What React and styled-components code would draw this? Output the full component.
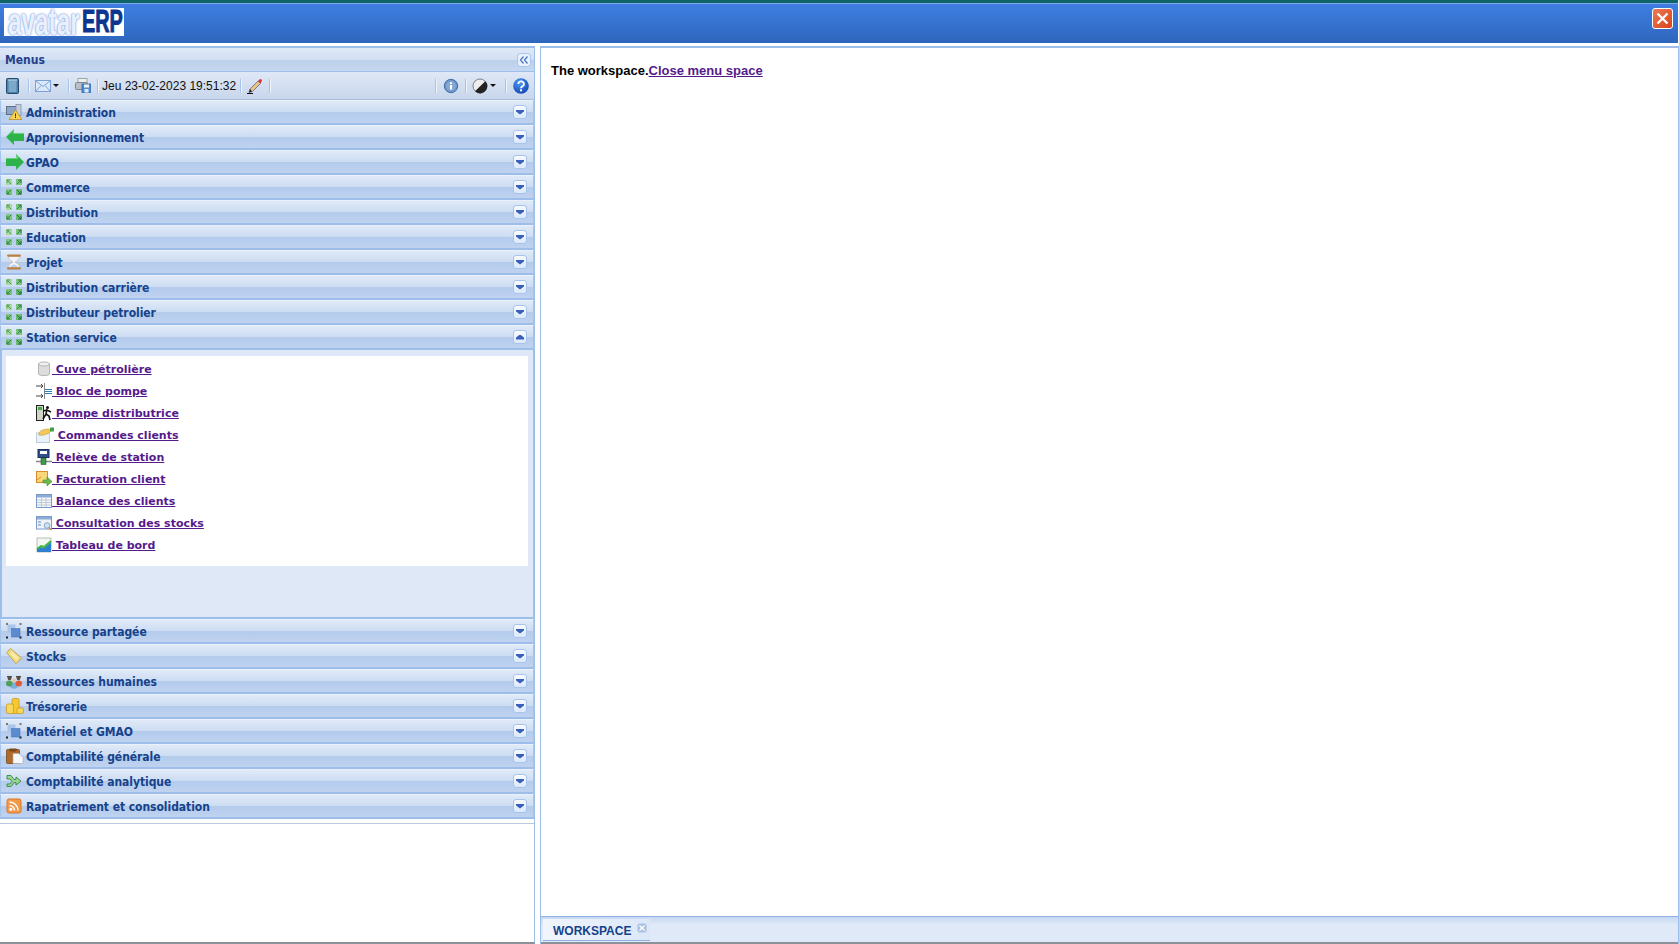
import React from "react";
import styled, { createGlobalStyle } from "styled-components";

const Global = createGlobalStyle`
  html, body { margin: 0; height: 100%; background: #fff; overflow: hidden; }
  body { font-family: "Liberation Sans", Arial, sans-serif; }
  svg { flex: none; display: block; }
`;

const Page = styled.div`
  height: 944px;
  display: flex;
  flex-direction: column;
`;
const TopBar = styled.div`
  height: 43px;
  flex: none;
  box-sizing: border-box;
  margin-right: 1px;
  border-top: 3px solid #0f6468;
  box-shadow: inset 0 1px 0 #7fa6e6;
  background: linear-gradient(#3f7fe3, #2f66bd);
  display: flex;
  align-items: flex-start;
  justify-content: space-between;
  padding: 5px 5px 0 4px;
`;
const Logo = styled.div`
  width: 120px;
  height: 28px;
  background: #fff;
  display: flex;
  align-items: center;
  padding-left: 4px;
  box-sizing: border-box;
`;
const LogoSoft = styled.span`
  width: 74px;
  font: bold 38px/28px "Liberation Sans", sans-serif;
  color: #eaf0fc;
  text-shadow: 0 0 2px #6f92de, 0 0 3px #9db6ee;
  transform: scaleX(0.64);
  transform-origin: left center;
  white-space: nowrap;
`;
const LogoHard = styled.span`
  width: 38px;
  font: bold 31px/28px "Liberation Sans", sans-serif;
  color: #0d3590;
  -webkit-text-stroke: 1px #0d3590;
  transform: scaleX(0.64);
  transform-origin: left center;
  white-space: nowrap;
`;
const CloseBtn = styled.div`
  width: 21px;
  height: 21px;
  box-sizing: border-box;
  border: 1px solid #fff;
  border-radius: 3px;
  background: linear-gradient(135deg, #ec7a55, #d8441a);
  display: flex;
  align-items: center;
  justify-content: center;
`;
const Main = styled.div`
  flex: 1;
  min-height: 0;
  display: flex;
  padding-top: 3px;
`;
const Sidebar = styled.div`
  width: 535px;
  flex: none;
  box-sizing: border-box;
  border-right: 1px solid #9dbdea;
  border-bottom: 2px solid #8a9199;
  display: flex;
  flex-direction: column;
`;
const PanelHead = styled.div`
  height: 26px;
  flex: none;
  box-sizing: border-box;
  border-top: 2px solid #9dbdea;
  border-bottom: 1px solid #9dbdea;
  background: linear-gradient(#dfe9f7 0%, #d3e0f3 50%, #bcd0ec 52%, #c6d7f0 100%);
  display: flex;
  align-items: center;
  justify-content: space-between;
  padding: 0 3px 0 5px;
`;
const PanelTitle = styled.span`
  padding-top: 1px;
  font: bold 12px "DejaVu Sans Condensed", "Liberation Sans", sans-serif;
  color: #24408a;
`;
const Toolbar = styled.div`
  height: 28px;
  flex: none;
  box-sizing: border-box;
  background: linear-gradient(#dfe8f6, #c8d6ec);
  border-bottom: 1px solid #a9bcd8;
  display: flex;
  align-items: center;
  padding: 0 5px 0 6px;
`;
const ToolGroup = styled.div`
  display: flex;
  align-items: center;
`;
const Spacer = styled.div`
  flex: 1;
`;
const Sep = styled.span`
  width: 1px;
  height: 14px;
  background: #a8c3ea;
  box-shadow: 1px 0 0 #eef4fc;
  margin: 0 ${(p) => p.$right ?? 6}px 0 ${(p) => p.$left ?? 6}px;
`;
const ClockText = styled.span`
  font: 12px "Liberation Sans", sans-serif;
  color: #111;
  white-space: nowrap;
`;
const Caret = styled.span`
  width: 0;
  height: 0;
  border-left: 3px solid transparent;
  border-right: 3px solid transparent;
  border-top: 3px solid #111;
  margin-left: 2px;
`;
const Row = styled.div`
  height: 25px;
  box-sizing: border-box;
  flex: none;
  border: 1px solid #a6c3ec;
  border-bottom: 2px solid #9dbdea;
  border-top-color: #eaf1fb;
  background: linear-gradient(#e0eaf8 0%, #ccdcf2 50%, #b4cbec 52%, #bfd3f0 100%);
  display: flex;
  align-items: center;
  padding: 0 6px 0 5px;
`;
const RowIcon = styled.span`
  width: 16px;
  height: 16px;
  flex: none;
  display: flex;
`;
const RowLabel = styled.span`
  flex: 1;
  margin-left: 4px;
  padding-top: 1px;
  font: bold 12px "DejaVu Sans Condensed", "Liberation Sans", sans-serif;
  letter-spacing: -0.05px;
  color: #15428b;
`;
const ToggleBtn = styled.span`
  width: 14px;
  height: 14px;
  box-sizing: border-box;
  border: 1px solid #a9c4ea;
  border-radius: 3px;
  background: linear-gradient(#f8fbff, #dbe9fb);
  display: flex;
  align-items: center;
  justify-content: center;
`;
const Tri = styled.span`
  width: 8px;
  height: 5px;
  background: #3a5fb8;
  clip-path: ${(p) =>
    p.$up
      ? "polygon(50% 0, 100% 60%, 100% 100%, 0 100%, 0 60%)"
      : "polygon(0 0, 100% 0, 100% 40%, 50% 100%, 0 40%)"};
`;
const RowBody = styled.div`
  height: 269px;
  flex: none;
  box-sizing: border-box;
  background: #dfe8f6;
  border: 2px solid #9dbdea;
  border-top: 0;
  border-right-width: 1px;
  padding: 6px 5px 0 4px;
`;
const LinkBox = styled.div`
  height: 210px;
  background: #fff;
  box-sizing: border-box;
  padding: 2px 0 0 30px;
`;
const LinkRow = styled.div`
  height: 22px;
  display: flex;
  align-items: center;
`;
const MenuLink = styled.a`
  font: bold 11px "DejaVu Sans", Verdana, sans-serif;
  color: #551a8b;
  text-decoration: underline;
  white-space: pre;
  display: flex;
  align-items: center;
`;
const LinkIcon = styled.span`
  width: ${(p) => p.$width || 16}px;
  height: 16px;
  display: inline-flex;
`;
const MenuEnd = styled.div`
  margin-top: 4px;
  height: 1px;
  flex: none;
  background: #b9c9df;
`;
const Workspace = styled.div`
  flex: 1;
  margin-left: 5px;
  min-width: 0;
  box-sizing: border-box;
  border: 1px solid #9dbdea;
  border-top-width: 2px;
  border-bottom: 0;
  display: flex;
  flex-direction: column;
`;
const WorkBody = styled.div`
  flex: 1;
  padding: 15px 10px;
  font: bold 13px "Liberation Sans", sans-serif;
  color: #000;
`;
const WorkLink = styled.a`
  color: #551a8b;
  text-decoration: underline;
`;
const TabStrip = styled.div`
  height: 28px;
  flex: none;
  box-sizing: border-box;
  border-top: 1px solid #8db2e3;
  border-bottom: 2px solid #8a9199;
  background: linear-gradient(#c5d8f2, #dfe9f8 30%, #dfe9f8);
  padding: 2px 0 0 2px;
`;
const Tab = styled.div`
  width: 107px;
  height: 22px;
  box-sizing: border-box;
  background: linear-gradient(90deg, #f1f5fc, #dbe7f8);
  border-bottom: 1px solid #8db2e3;
  display: flex;
  align-items: center;
  padding: 2px 0 0 10px;
`;
const TabLabel = styled.span`
  font: bold 12px "Liberation Sans", sans-serif;
  color: #15428b;
`;
const TabClose = styled.span`
  width: 10px;
  height: 10px;
  box-sizing: border-box;
  border: 1px solid #c2d3ec;
  border-radius: 3px;
  background: #a9bfe0;
  margin: -6px 0 0 6px;
  display: flex;
  align-items: center;
  justify-content: center;
`;

const Ic = ({ children, w = 16 }) => (
  <svg width={w} height="16" viewBox={`0 0 ${w} 16`}>{children}</svg>
);

const Book = () => (
  <svg width="13" height="16" viewBox="0 0 13 16">
    <rect x="0.5" y="0.5" width="12" height="15" rx="1" fill="#4a7fa8" stroke="#27496b" />
    <rect x="2.5" y="3" width="8" height="11" fill="#7aa9cc" />
    <rect x="2" y="1.5" width="9" height="1.2" fill="#bcd5e8" />
  </svg>
);
const Mail = () => (
  <svg width="16" height="12" viewBox="0 0 16 12">
    <rect x="0.5" y="0.5" width="15" height="11" fill="#dce9fb" stroke="#7da0d8" />
    <path d="M1 1l7 5.5L15 1M1 11l5-5.5M15 11l-5-5.5" fill="none" stroke="#7da0d8" />
  </svg>
);
const Printer = () => (
  <svg width="16" height="15" viewBox="0 0 16 15">
    <rect x="3" y="0.5" width="9" height="5" fill="#eee" stroke="#9aa" />
    <rect x="0.5" y="4.5" width="12" height="7" rx="1" fill="#b9bfc7" stroke="#7e8790" />
    <rect x="7" y="6" width="9" height="9" fill="#4f8fd0" stroke="#2d5f9c" strokeWidth="0.7" />
    <rect x="9" y="6.5" width="5" height="3" fill="#eaf2fb" />
    <rect x="9.5" y="11" width="4" height="3.5" fill="#dfe8f2" />
  </svg>
);
const Pencil = () => (
  <Ic>
    <path d="M3 11L11 3l2.5 2.500-8 8-3.500 1z" fill="#e8c878" stroke="#6a5fa8" strokeWidth="0.8" />
    <path d="M11 3l1.500-1.500a1.300 1.300 0 0 1 2 2L13.500 5.500z" fill="#d8342a" />
    <path d="M0 15.500h6" stroke="#111" />
    <path d="M3 11l2 2.500-3 1z" fill="#222" />
  </Ic>
);
const Info = () => (
  <Ic>
    <circle cx="8" cy="8" r="6.700" fill="#6f97c9" stroke="#436fa6" />
    <circle cx="8" cy="8" r="4.700" fill="#86a9d6" />
    <rect x="7" y="7" width="2" height="4.500" fill="#fff" />
    <rect x="7" y="4.200" width="2" height="1.800" fill="#fff" />
  </Ic>
);
const Contrast = () => (
  <Ic>
    <circle cx="8" cy="8" r="7" fill="#eee" stroke="#555" strokeWidth="0.7" />
    <path d="M13.300 3.200A7 7 0 0 1 3 13.200z" fill="#222" />
  </Ic>
);
const Help = () => (
  <Ic>
    <defs>
      <radialGradient id="hlp" cx="0.4" cy="0.3" r="0.8">
        <stop offset="0" stopColor="#4d9af0" />
        <stop offset="1" stopColor="#0d3fb0" />
      </radialGradient>
    </defs>
    <circle cx="8" cy="8" r="7.800" fill="url(#hlp)" />
    <path d="M5.300 6a2.800 2.600 0 1 1 4.200 2.200C8.500 8.900 8 9.200 8 10.300" fill="none" stroke="#fff" strokeWidth="1.800" />
    <rect x="7" y="11.300" width="2" height="2" fill="#fff" />
  </Ic>
);
const Collapse = () => (
  <svg width="14" height="14" viewBox="0 0 14 14">
    <rect x="0.500" y="0.500" width="13" height="13" rx="3" fill="#e9f1fc" stroke="#a9c4ea" />
    <path d="M6.500 3.500L3.500 7l3 3.500M10.500 3.500L7.500 7l3 3.500" fill="none" stroke="#4f76c2" strokeWidth="1.300" />
  </svg>
);

const Warn = () => (
  <Ic>
    <rect x="0.500" y="2.500" width="11" height="8" fill="#8ea6c4" stroke="#5d6f89" />
    <rect x="10" y="0.500" width="5" height="11" fill="#c3ccd8" stroke="#7f8ba0" strokeWidth="0.7" />
    <path d="M9.500 6L16 15.500H3z" fill="#f7d34e" stroke="#b4862a" strokeWidth="0.7" />
    <rect x="9" y="9.500" width="1" height="3" fill="#333" />
    <rect x="9" y="13" width="1" height="1" fill="#333" />
  </Ic>
);
const ArrowLeft = () => (
  <Ic w={18}>
    <path d="M0 8l8-8v4h10v8H8v4z" fill="#2eb24a" />
    <path d="M0 8l8-8v4h10v1H7V2.500z" fill="#68d078" />
  </Ic>
);
const ArrowRight = () => (
  <Ic w={18}>
    <path d="M18 8l-8-8v4H0v8h10v4z" fill="#2eb24a" />
    <path d="M0 4h10V0l2 2v3H0z" fill="#68d078" />
  </Ic>
);
const Arrows = () => (
  <Ic>
    <path d="M0 0h6v6H0z" fill="#a8d8a2" />
    <path d="M1 1l4 4M1 1h3M1 1v3" stroke="#4d9c56" fill="none" />
    <path d="M10 0h6v6h-6z" fill="#7cc47f" />
    <path d="M15 1l-4 4M15 1h-3M15 1v3" stroke="#2f8440" fill="none" />
    <path d="M0 10h6v6H0z" fill="#7cc47f" />
    <path d="M1 15l4-4M1 15h3M1 15v-3" stroke="#2f8440" fill="none" />
    <path d="M10 10h6v6h-6z" fill="#6ab872" />
    <path d="M15 15l-4-4M15 15h-3M15 15v-3" stroke="#1f7432" fill="none" />
  </Ic>
);
const Hourglass = () => (
  <Ic>
    <path d="M2.500 2c0 5 4.500 5 4.500 6s-4.500 1-4.500 6h11c0-5-4.500-5-4.500-6s4.500-1 4.500-6z" fill="#f2f6fc" stroke="#c3b49c" strokeWidth="0.6" />
    <path d="M4 13.500c1-2 3-3 4-3s3 1 4 3z" fill="#b9cfe9" />
    <rect x="1" y="0.500" width="14" height="2.200" rx="1.100" fill="#b98244" />
    <rect x="1" y="13.300" width="14" height="2.200" rx="1.100" fill="#b98244" />
  </Ic>
);
const Shapes = () => (
  <Ic>
    <rect x="1.500" y="1.500" width="8" height="8" fill="#a9c6ea" />
    <rect x="5.500" y="5.500" width="8.500" height="8.500" fill="#5b8ad0" stroke="#3f6fb8" strokeWidth="0.5" />
    <rect x="0" y="0" width="2" height="2" fill="#777" />
    <rect x="13.500" y="0" width="2" height="2" fill="#777" />
    <rect x="0" y="13.500" width="2" height="2" fill="#222" />
    <rect x="13.500" y="13.500" width="2" height="2" fill="#222" />
  </Ic>
);
const Tag = () => (
  <Ic>
    <path d="M0.500 4.500L4.500 0.500l11 9.500-5.500 5.500z" fill="#f3dc85" stroke="#c2a544" />
    <path d="M3 4.500l7.500 7.500 2-2-7.500-7.500z" fill="#f9ecae" />
    <circle cx="3.800" cy="3.800" r="1" fill="#fff" stroke="#c2a544" strokeWidth="0.5" />
  </Ic>
);
const People = () => (
  <Ic>
    <ellipse cx="8" cy="12.500" rx="4" ry="3.200" fill="#79b0dc" />
    <ellipse cx="3.200" cy="10.500" rx="3.200" ry="3" fill="#4ea257" />
    <ellipse cx="12.800" cy="10.500" rx="3.200" ry="3" fill="#e05a3a" />
    <path d="M1 3h5v1.500H1zM10 3h5v1.500h-5z" fill="#54493f" />
    <circle cx="3.500" cy="5.500" r="1.800" fill="#54493f" />
    <circle cx="12.500" cy="5.500" r="1.800" fill="#54493f" />
    <circle cx="8" cy="7.500" r="2" fill="#e9c9a4" />
  </Ic>
);
const Coins = () => (
  <Ic w={18}>
    <rect x="6" y="0.500" width="7" height="15" rx="1.500" fill="#f6c834" stroke="#c4921a" strokeWidth="0.7" />
    <rect x="0.500" y="6" width="7" height="9.500" rx="1.500" fill="#f9d75a" stroke="#c4921a" strokeWidth="0.7" />
    <rect x="11" y="10" width="6.500" height="5.500" rx="1.500" fill="#f9d75a" stroke="#c4921a" strokeWidth="0.7" />
  </Ic>
);
const Clipboard = () => (
  <Ic w={18}>
    <rect x="0.500" y="1.500" width="13" height="14" rx="1" fill="#b26a28" stroke="#6e3c12" strokeWidth="0.7" />
    <rect x="3.500" y="0.500" width="7" height="3" fill="#7a4a1c" />
    <path d="M7 5.500h6l4 4v6H7z" fill="#f6f7f9" stroke="#a9b0ba" strokeWidth="0.7" />
  </Ic>
);
const Branch = () => (
  <Ic>
    <path d="M1 2.500h4l3 4h2V4l5 4-5 4v-2.500H8l-3 4H1v-2.500h3l2-2.500-2-2.500H1z" fill="#9fd39c" stroke="#2f8a3e" strokeWidth="0.9" />
  </Ic>
);
const Rss = () => (
  <Ic>
    <rect x="1" y="1" width="14" height="14" rx="2" fill="#f29a4a" stroke="#d57a2a" />
    <circle cx="4.800" cy="11.300" r="1.500" fill="#fff" />
    <path d="M3.500 7.500a5 5 0 0 1 5 5M3.500 4a8.500 8.500 0 0 1 8.500 8.500" fill="none" stroke="#fff" strokeWidth="1.500" />
  </Ic>
);
const Cylinder = () => (
  <Ic>
    <path d="M2.500 3v10c0 2 11 2 11 0V3z" fill="#dcdcdc" stroke="#b5b5b5" />
    <ellipse cx="8" cy="3" rx="5.500" ry="2" fill="#f2f2f2" stroke="#b5b5b5" />
  </Ic>
);
const Block = () => (
  <Ic>
    <path d="M0 3h7M5 1l2 2-2 2M0 13h7M5 11l2 2-2 2" stroke="#444" fill="none" />
    <path d="M8.500 0v16" stroke="#888" />
    <path d="M9 6.500h7M9 8.500h7M9 10.500h7" stroke="#2b7fc0" />
  </Ic>
);
const Runner = () => (
  <Ic>
    <rect x="0.500" y="0.500" width="7" height="15" fill="#cfd6c8" stroke="#222" />
    <rect x="2" y="2" width="4" height="3" fill="#4ca84c" />
    <circle cx="11.500" cy="2.500" r="1.500" fill="#111" />
    <path d="M11 4l-1 5 3 2 1 4M10 9l-3 5M7 6l4-1 4 2" stroke="#111" strokeWidth="1.600" fill="none" />
  </Ic>
);
const Hand = () => (
  <Ic w={18}>
    <rect x="0.500" y="6" width="13" height="9.500" fill="#eaf1f9" stroke="#bccde2" />
    <path d="M3 6c1-3 6-4 10-4l2 2c-2 3-9 5-12 4z" fill="#f2c85c" stroke="#c9982c" strokeWidth="0.6" />
    <rect x="14" y="0.500" width="4" height="4" fill="#3fa14a" />
  </Ic>
);
const Station = () => (
  <Ic>
    <rect x="2" y="0.500" width="11" height="8" fill="#2d4f8e" stroke="#1d2f5a" />
    <rect x="4" y="2" width="7" height="3" fill="#fff" />
    <path d="M0 12.500h16" stroke="#888" strokeWidth="1.500" />
    <rect x="5" y="9" width="5" height="6.500" fill="#3f9a4a" stroke="#205a2a" strokeWidth="0.6" />
  </Ic>
);
const Invoice = () => (
  <Ic>
    <rect x="0.500" y="0.500" width="11" height="11" fill="#f8d77a" stroke="#d98c2c" />
    <path d="M1 9l4-3" stroke="#d98c2c" />
    <path d="M7 9h4V6l5 4.500-5 4.500v-3H7z" fill="#6bb84f" stroke="#3d8a2c" strokeWidth="0.6" />
  </Ic>
);
const Table = () => (
  <Ic>
    <rect x="0.500" y="1.500" width="15" height="13" fill="#f4f7fb" stroke="#7b9cc8" />
    <rect x="1" y="2" width="14" height="2.500" fill="#8cacd8" />
    <path d="M1 7h14M1 9.500h14M1 12h14M5.500 5v9M10 5v9" stroke="#c0c8d4" />
  </Ic>
);
const Search = () => (
  <Ic>
    <rect x="0.500" y="1.500" width="15" height="12.500" fill="#eef3fa" stroke="#7b9cc8" />
    <rect x="1" y="2" width="14" height="2.500" fill="#8cacd8" />
    <path d="M2 7h3M2 10h3" stroke="#6a85ad" />
    <circle cx="11" cy="10.500" r="2.800" fill="#cfe2f6" stroke="#8ba5c8" />
    <path d="M13 12.500l2.500 2.500" stroke="#c88c3c" strokeWidth="1.300" />
  </Ic>
);
const Chart = () => (
  <Ic>
    <rect x="1" y="1" width="14" height="14" fill="#f4f6f4" stroke="#9aa7a0" strokeWidth="0.7" />
    <path d="M1 15V12l4-2 3 1 7-6v10z" fill="#2f7fd0" />
    <path d="M1 12l4-3 3 1 7-6" stroke="#3fb83f" strokeWidth="2" fill="none" />
  </Ic>
);

const topRows = [
  ["Administration", <Warn />],
  ["Approvisionnement", <ArrowLeft />],
  ["GPAO", <ArrowRight />],
  ["Commerce", <Arrows />],
  ["Distribution", <Arrows />],
  ["Education", <Arrows />],
  ["Projet", <Hourglass />],
  ["Distribution carrière", <Arrows />],
  ["Distributeur petrolier", <Arrows />],
];
const bottomRows = [
  ["Ressource partagée", <Shapes />],
  ["Stocks", <Tag />],
  ["Ressources humaines", <People />],
  ["Trésorerie", <Coins />],
  ["Matériel et GMAO", <Shapes />],
  ["Comptabilité générale", <Clipboard />],
  ["Comptabilité analytique", <Branch />],
  ["Rapatriement et consolidation", <Rss />],
];
const links = [
  ["Cuve pétrolière", <Cylinder />],
  ["Bloc de pompe", <Block />],
  ["Pompe distributrice", <Runner />],
  ["Commandes clients", <Hand />, 18],
  ["Relève de station", <Station />],
  ["Facturation client", <Invoice />],
  ["Balance des clients", <Table />],
  ["Consultation des stocks", <Search />],
  ["Tableau de bord", <Chart />],
];

const MenuRow = ({ label, icon, open }) => (
  <Row>
    <RowIcon>{icon}</RowIcon>
    <RowLabel>{label}</RowLabel>
    <ToggleBtn><Tri $up={open} /></ToggleBtn>
  </Row>
);

export default function App() {
  return (
    <Page>
      <Global />
      <TopBar>
        <Logo>
          <LogoSoft>avatar</LogoSoft>
          <LogoHard>ERP</LogoHard>
        </Logo>
        <CloseBtn>
          <svg width="15" height="15" viewBox="0 0 15 15">
            <path d="M2.500 2.500l10 10M12.500 2.500l-10 10" stroke="#fff" strokeWidth="2.300" />
          </svg>
        </CloseBtn>
      </TopBar>
      <Main>
        <Sidebar>
          <PanelHead>
            <PanelTitle>Menus</PanelTitle>
            <Collapse />
          </PanelHead>
          <Toolbar>
            <Book />
            <Sep $left={9} $right={6} />
            <ToolGroup><Mail /><Caret /></ToolGroup>
            <Sep $left={9} $right={6} />
            <Printer />
            <Sep $left={6} $right={4} />
            <ClockText>Jeu 23-02-2023 19:51:32</ClockText>
            <Sep $left={4} $right={6} />
            <Pencil />
            <Sep $left={6} $right={0} />
            <Spacer />
            <Sep $left={0} $right={7} />
            <Info />
            <Sep $left={6} $right={6} />
            <ToolGroup><Contrast /><Caret /></ToolGroup>
            <Sep $left={9} $right={7} />
            <Help />
          </Toolbar>
          {topRows.map(([label, icon]) => (
            <MenuRow key={label} label={label} icon={icon} />
          ))}
          <MenuRow label="Station service" icon={<Arrows />} open />
          <RowBody>
            <LinkBox>
              {links.map(([label, icon, width]) => (
                <LinkRow key={label}>
                  <MenuLink href="#">
                    <LinkIcon $width={width}>{icon}</LinkIcon>
                    {" " + label}
                  </MenuLink>
                </LinkRow>
              ))}
            </LinkBox>
          </RowBody>
          {bottomRows.map(([label, icon]) => (
            <MenuRow key={label} label={label} icon={icon} />
          ))}
          <MenuEnd />
        </Sidebar>
        <Workspace>
          <WorkBody>
            The workspace.<WorkLink href="#">Close menu space</WorkLink>
          </WorkBody>
          <TabStrip>
            <Tab>
              <TabLabel>WORKSPACE</TabLabel>
              <TabClose>
                <svg width="6" height="6" viewBox="0 0 6 6">
                  <path d="M0.500 0.500l5 5M5.500 0.500l-5 5" stroke="#fff" strokeWidth="1.400" />
                </svg>
              </TabClose>
            </Tab>
          </TabStrip>
        </Workspace>
      </Main>
    </Page>
  );
}
